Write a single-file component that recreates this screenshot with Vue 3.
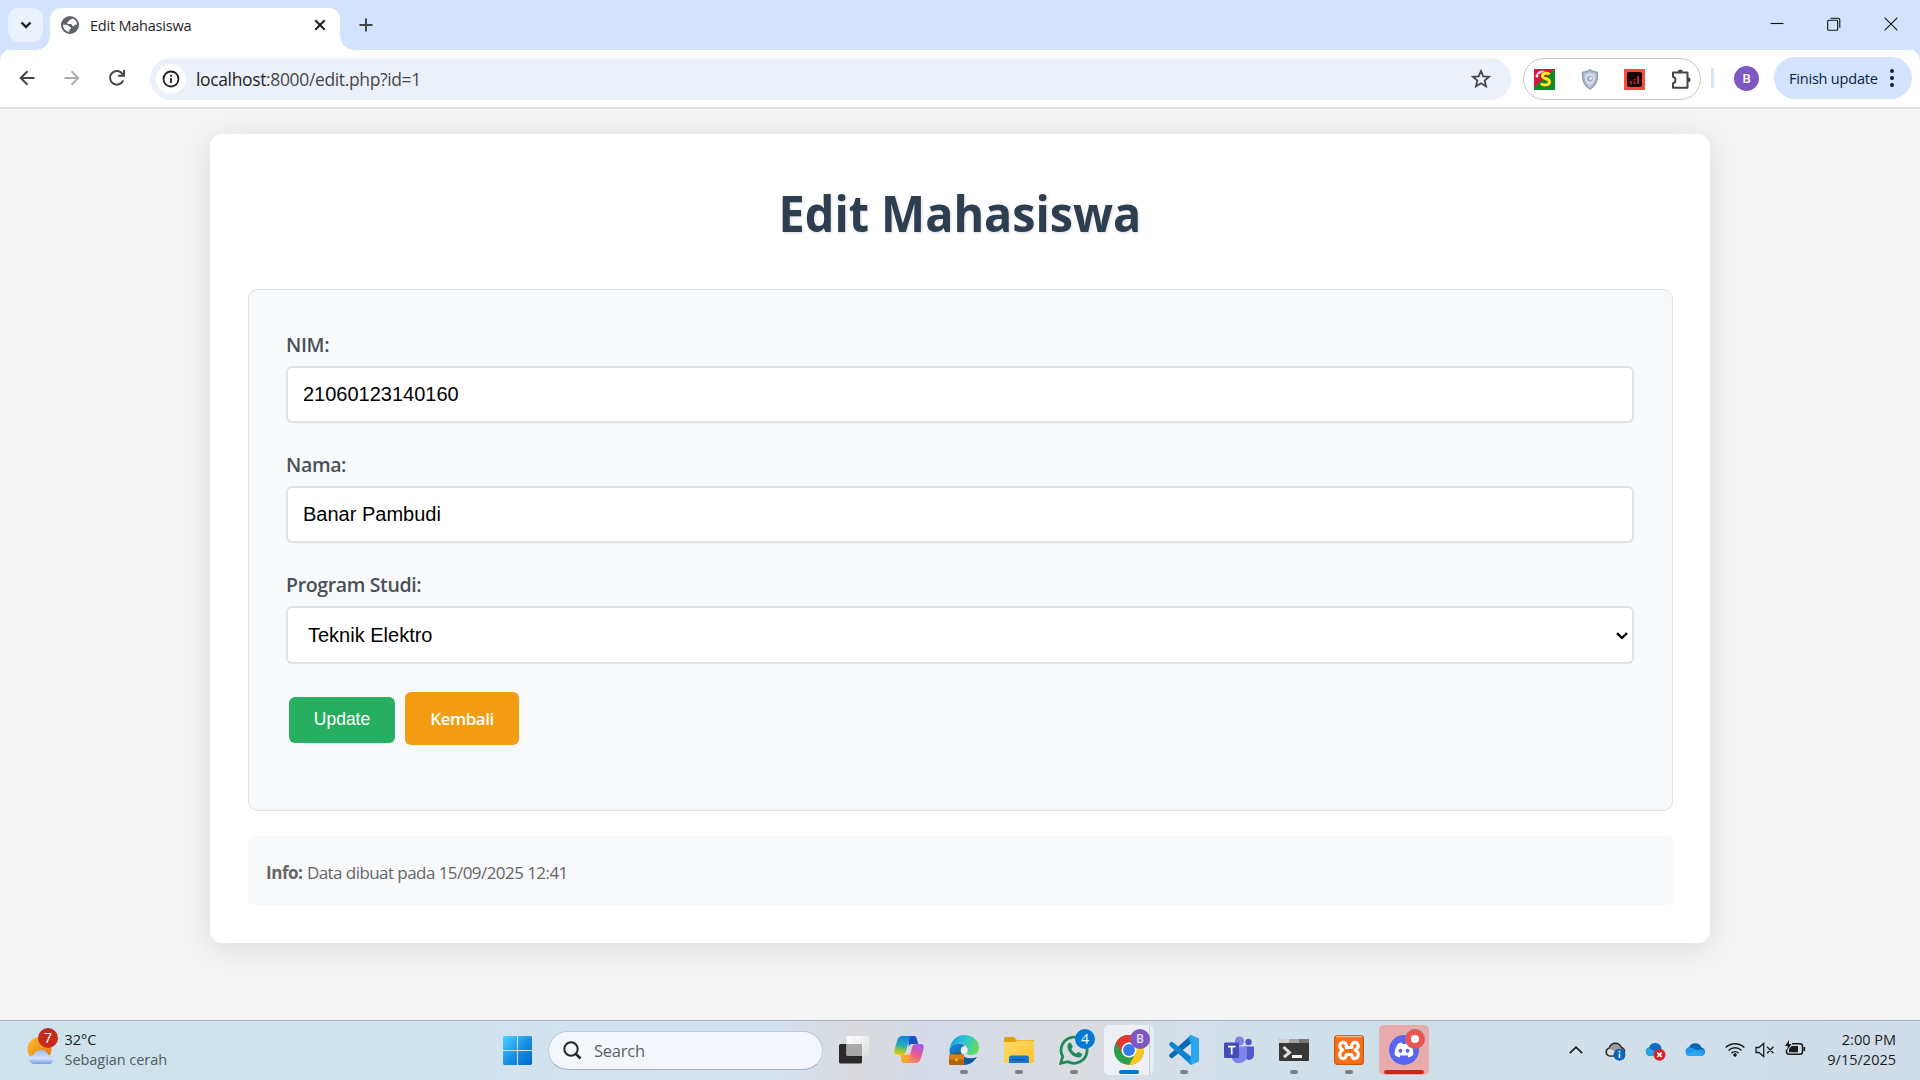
<script setup>
import { ref } from 'vue'

const nim = ref('21060123140160')
const nama = ref('Banar Pambudi')
const prodi = ref('Teknik Elektro')
</script>

<template>
  <div class="screen">
    <header class="tabstrip">
      <button class="tab-search">
        <svg width="12" height="8" viewBox="0 0 12 8"><path d="M1.500 1.500 6 6l4.500-4.500" fill="none" stroke="#1f1f1f" stroke-width="2.400" /></svg>
      </button>
      <div class="tab">
        <svg class="globe" width="18" height="18" viewBox="0 0 18 18">
          <circle cx="9" cy="9" r="9" fill="#5f6368" />
          <path d="M11 2.200c-.3 1.300-1.300 1.600-2.600 1.800-.2 1.500-1.200 1.400-2 2.100-.5 1.200.2 2 1.600 1.900 2-.2 3.300.2 3.400 2.100 1 .2 1.600-.2 2.100-.9.400-.7 1.300-.8 2.500-.2A7 7 0 0 0 11 2.200z" fill="#fff" />
          <path d="M2 8.600c1.200.3 2.800.1 4.200.4 1.700.4 1.200 1.800 2.600 1.900 1.200.1 1.500.9 1.100 1.700-.3.800-1.500.5-1.500 1.500l-.2 1.800A7 7 0 0 1 2 8.600z" fill="#fff" />
        </svg>
        <span class="tab-title">Edit Mahasiswa</span>
        <svg class="tab-close" width="12" height="12" viewBox="0 0 12 12"><path d="m1.300 1.300 9.400 9.400m0-9.400-9.400 9.400" stroke="#1f1f1f" stroke-width="2" /></svg>
      </div>
      <svg class="new-tab" width="14" height="14" viewBox="0 0 14 14"><path d="M7 .5v13M.5 7h13" stroke="#444746" stroke-width="2" /></svg>
      <div class="window-buttons">
        <svg width="14" height="14" viewBox="0 0 14 14"><path d="M.5 6.500h13" stroke="#111" stroke-width="1.100" /></svg>
        <svg width="14" height="14" viewBox="0 0 14 14" fill="none" stroke="#111" stroke-width="1.100"><rect x=".7" y="3.200" width="10" height="10" rx="1" /><path d="M3.500 1.200h7.300a2 2 0 0 1 2 2v7.500" /></svg>
        <svg width="14" height="14" viewBox="0 0 14 14"><path d="m.6.6 12.800 12.800m0-12.800L.6 13.400" stroke="#111" stroke-width="1.100" /></svg>
      </div>
    </header>

    <nav class="toolbar-back">
      <div class="toolbar">
        <div class="nav-buttons">
          <svg width="16" height="16" viewBox="0 0 16 16" fill="none" stroke="#444746" stroke-width="2"><path d="M15.500 8H2M8.500 1.200 1.700 8l6.800 6.800" /></svg>
          <svg width="16" height="16" viewBox="0 0 16 16" fill="none" stroke="#adafae" stroke-width="2"><path d="M.5 8H14M7.500 1.200 14.300 8l-6.800 6.800" /></svg>
          <svg width="18" height="18" viewBox="0 0 18 18" fill="none" stroke="#444746" stroke-width="2"><path d="M15.200 11.300A6.800 6.800 0 1 1 14.800 5.500M16 1v5.800h-5.800" /></svg>
        </div>
        <div class="omnibox">
          <span class="site-info">
            <svg width="18" height="18" viewBox="0 0 18 18"><circle cx="9" cy="9" r="7.500" fill="none" stroke="#1f1f1f" stroke-width="1.800" /><path d="M9 8v5M9 4.800v1.900" stroke="#1f1f1f" stroke-width="1.800" /></svg>
          </span>
          <span class="url"><b>localhost</b>:8000/edit.php?id=1</span>
          <svg class="star" width="20" height="20" viewBox="0 0 20 20"><path d="m10 2 2.300 5.300 5.800.5-4.400 3.800 1.300 5.700-5-3-5 3 1.300-5.700L1.900 7.800l5.800-.5z" fill="none" stroke="#444746" stroke-width="1.800" /></svg>
        </div>
        <div class="extensions">
          <svg width="21" height="21" viewBox="0 0 21 21">
            <path d="M0 0h21v21H0z" fill="#0b8d27" /><path d="M0 0h21L0 18z" fill="#e0123a" />
            <path d="M15.500 6c-1.500-2-7-1.700-7 1.200 0 3.500 7.200 2 7 5.800-.2 3.700-6.700 4-8.500 1.500" fill="none" stroke="#7d4b00" stroke-width="4" />
            <path d="M15.500 5.500c-1.500-2-7-1.700-7 1.500 0 3.500 7.200 2 7 5.800-.2 3.700-6.700 4-8.500 1.500" fill="none" stroke="#ffe928" stroke-width="2.900" />
            <path d="M2 7C3 2 6 1 11 2L7 4z" fill="#f4d8dd" /><circle cx="3" cy="7" r="1.500" fill="#fff" />
          </svg>
          <svg width="18" height="21" viewBox="0 0 18 21">
            <path d="M9 .6c2.400 1.700 4.800 2.300 7.600 2.500.5 7.700-1.300 13.700-7.600 17.200C2.700 16.800.9 10.800 1.400 3.100 4.200 2.900 6.600 2.300 9 .6z" fill="#a6b1c6" stroke="#8994a8" />
            <path d="M9 2.800c1.800 1.100 3.500 1.600 5.700 1.800.1 6-1.300 10.400-5.700 13.400-4.400-3-5.800-7.400-5.700-13.400C5.500 4.400 7.200 3.900 9 2.800z" fill="#c3cddd" />
            <circle cx="9" cy="9.700" r="4.600" fill="#e8edf5" /><circle cx="9" cy="9.700" r="3.200" fill="#a5b0c5" /><circle cx="9.600" cy="9.300" r="1.600" fill="#dce2ec" />
          </svg>
          <svg width="21" height="21" viewBox="0 0 21 21"><path d="M0 0h21v21H0z" fill="#ff4b3e" /><rect x="3" y="3" width="15" height="15" rx="2" fill="#160606" /><path d="M7 12v3M10.500 10v1.500M10.500 12.500V15M14 7v8" stroke="#bd3029" stroke-width="1.800" /></svg>
          <svg width="21" height="21" viewBox="0 0 21 21"><path d="M2 3.500h14.500v15.300H2v-4.300c3.300-.8 3.300-6 0-6.800z" fill="none" stroke="#444746" stroke-width="2" stroke-linejoin="round" /><path d="M6.800 3a2.500 2.500 0 0 1 5 0zM17 8.300a2.500 2.500 0 0 1 0 5z" fill="#444746" /></svg>
        </div>
        <i class="divider"></i>
        <span class="avatar">B</span>
        <button class="update-chip">
          <span>Finish update</span>
          <svg width="4" height="18" viewBox="0 0 4 18" fill="#041e49"><circle cx="2" cy="2" r="2" /><circle cx="2" cy="9" r="2" /><circle cx="2" cy="16" r="2" /></svg>
        </button>
      </div>
    </nav>

    <main class="page">
      <section class="card">
        <h1><span>Edit Mahasiswa</span></h1>
        <form class="panel" @submit.prevent>
          <label for="nim">NIM:</label>
          <input id="nim" v-model="nim" type="text" />
          <label for="nama">Nama:</label>
          <input id="nama" v-model="nama" type="text" />
          <label for="prodi">Program Studi:</label>
          <div class="select-wrap">
            <select id="prodi" v-model="prodi"><option>Teknik Elektro</option></select>
            <svg width="12" height="8" viewBox="0 0 12 8"><path d="M1 1.200 6 6l5-4.800" fill="none" stroke="#000" stroke-width="2.300" /></svg>
          </div>
          <div class="actions">
            <button class="btn update" type="submit">Update</button>
            <a class="btn back">Kembali</a>
          </div>
        </form>
        <div class="info"><strong>Info:</strong> <span>Data dibuat pada 15/09/2025 12:41</span></div>
      </section>
    </main>

    <footer class="taskbar">
      <div class="weather">
        <div class="weather-icon">
          <svg width="28" height="30" viewBox="0 0 28 30">
            <defs>
              <linearGradient id="sun" x1="0" y1="0" x2="1" y2="1"><stop offset="0" stop-color="#f5c52f" /><stop offset="1" stop-color="#ee6a12" /></linearGradient>
              <linearGradient id="cloud" x1="0" y1="0" x2="0" y2="1"><stop offset="0" stop-color="#9fbdf2" /><stop offset=".6" stop-color="#d3e1fa" /><stop offset="1" stop-color="#6f9fe8" /></linearGradient>
            </defs>
            <circle cx="12.500" cy="14" r="12" fill="url(#sun)" />
            <path d="M7 29a4.500 4.500 0 0 1-.5-9c1-3 4-5 7.500-5s6.500 2 7.200 5A4.500 4.500 0 0 1 22.500 29z" fill="url(#cloud)" />
          </svg>
          <span class="badge red">7</span>
        </div>
        <div class="weather-text"><span>32°C</span><span class="muted">Sebagian cerah</span></div>
      </div>

      <svg class="start" width="29" height="29" viewBox="0 0 29 29">
        <defs><linearGradient id="win" x1="0" y1="0" x2="1" y2="1"><stop offset="0" stop-color="#4fd0ff" /><stop offset=".5" stop-color="#1a93e4" /><stop offset="1" stop-color="#0067cf" /></linearGradient></defs>
        <path d="M1 0h13v14H0V1zM15 0h13l1 1v13H15zM0 15h14v14H1l-1-1zM15 15h14v13l-1 1H15z" fill="url(#win)" />
      </svg>
      <div class="search">
        <svg width="19" height="19" viewBox="0 0 19 19"><circle cx="8" cy="8" r="6.700" fill="none" stroke="#252525" stroke-width="2" /><path d="m12.800 12.800 4.700 4.700" stroke="#252525" stroke-width="2.600" /></svg>
        <span>Search</span>
      </div>

      <div class="apps">
        <div class="app">
          <svg width="30" height="30" viewBox="0 0 30 30">
            <defs><linearGradient id="tv" x1="0" y1="0" x2="1" y2="1"><stop offset="0" stop-color="#fff" /><stop offset="1" stop-color="#dedede" /></linearGradient></defs>
            <rect x="0" y="9" width="23" height="19.500" rx="1.500" fill="#2b2a28" /><rect x="7.500" y="1" width="22.500" height="20" rx="1.500" fill="url(#tv)" /><path d="M7.500 9H23v12H9a1.500 1.500 0 0 1-1.500-1.500z" fill="#aaaaa9" />
          </svg>
        </div>
        <div class="app">
          <svg width="30" height="30" viewBox="0 0 30 30">
            <defs>
              <linearGradient id="cp1" x1=".5" y1="0" x2=".3" y2="1"><stop offset="0" stop-color="#1284e6" /><stop offset=".5" stop-color="#27aeb4" /><stop offset=".75" stop-color="#90c73e" /><stop offset="1" stop-color="#f3c51b" /></linearGradient>
              <linearGradient id="cp2" x1=".7" y1="0" x2=".3" y2="1"><stop offset="0" stop-color="#a45bf2" /><stop offset=".5" stop-color="#ec5597" /><stop offset="1" stop-color="#ff9250" /></linearGradient>
            </defs>
            <path d="M14 1h6c2 0 2.600 1.500 3.200 4l1 4H18c-2 0-2.600 1-3.200 3z" fill="#1b4fc4" />
            <path d="M16 28h-6c-2 0-2.600-2-3.500-8H12c2 0 3-.6 3.600-3z" fill="#f7a929" />
            <path d="M8.500 1H18c-2.500.5-3 3.500-4 7.500l-2 8c-.7 2.500-1.500 3.500-4 3.500H3.500C.5 20-.2 18 .5 15L3 6c.9-3.300 2.500-5 5.500-5z" fill="url(#cp1)" />
            <path d="M21.500 28H12c2.500-.5 3-3.500 4-7.500l2-8C18.700 10 19.500 9 22 9h4.500c3 0 3.700 2 3 5L27 23c-.9 3.300-2.500 5-5.500 5z" fill="url(#cp2)" />
          </svg>
        </div>
        <div class="app running">
          <svg width="30" height="30" viewBox="0 0 30 30">
            <defs>
              <linearGradient id="ed1" x1="0" y1=".2" x2="1" y2=".5"><stop offset="0" stop-color="#189de0" /><stop offset=".5" stop-color="#2cc5d4" /><stop offset="1" stop-color="#62dd5a" /></linearGradient>
              <linearGradient id="ed2" x1="0" y1="0" x2="1" y2="1"><stop offset="0" stop-color="#1887d8" /><stop offset="1" stop-color="#0d4c91" /></linearGradient>
            </defs>
            <path d="M.6 14C3 10 6 8.500 10 8.500c3 0 5 1 6 2.500-4 0-5 4-3.500 7.500 2.500 5 9.500 6 15.500 3.500-3 5-8 8-13 8A14.800 14.800 0 0 1 .6 14z" fill="url(#ed2)" />
            <path d="M.6 14C2 5.500 8 0 15 0c8.500 0 15 5.500 15 12.500 0 5-3.500 7.500-8 7.500-3.500 0-5-1.300-4.500-3 1.300-2.500.6-8.500-6.500-8.500C6 8.500 2 11 .6 14z" fill="url(#ed1)" />
            <circle cx="15.300" cy="15" r="3.500" fill="#e5edf3" />
            <rect x="0" y="19.500" width="15" height="10.500" rx="1" fill="#b5620b" /><path d="M0 21a1.500 1.500 0 0 1 1.500-1.500h12A1.500 1.500 0 0 1 15 21v3.500H0z" fill="#d9820f" /><path d="M5 19.500v-1.200h5v1.200" fill="none" stroke="#7b3d05" /><rect x="6.500" y="23.500" width="2" height="2.500" fill="#ffd348" />
          </svg>
        </div>
        <div class="app running">
          <svg width="30" height="30" viewBox="0 0 30 30">
            <defs><linearGradient id="fo" x1="0" y1="0" x2="1" y2="1"><stop offset="0" stop-color="#ffdc6b" /><stop offset="1" stop-color="#fcc02b" /></linearGradient></defs>
            <path d="M0 3.500A1.500 1.500 0 0 1 1.500 2H10l3 3h17v6H0z" fill="#e0a10c" /><path d="M0 7h11l2-1.500h15.500A1.500 1.500 0 0 1 30 7v19.500a1.500 1.500 0 0 1-1.500 1.500h-27A1.500 1.500 0 0 1 0 26.500z" fill="url(#fo)" />
            <path d="M5 28v-5a2.500 2.500 0 0 1 2.500-2.500h15A2.500 2.500 0 0 1 25 23v5z" fill="#1378cf" /><path d="M8.500 24.700h13" stroke="#0a4d94" stroke-width="1.300" />
          </svg>
        </div>
        <div class="app running">
          <svg width="30" height="30" viewBox="0 0 30 30">
            <path d="m1.700 28.300 2-6.800A13 13 0 1 1 9 26.700z" fill="none" stroke="#1e8a5b" stroke-width="2.800" />
            <path d="M8.600 9.600c.9-1.700 2.600-2.200 3.300-1.500l1.800 3.500c.2.900-1 1.900-1.300 2.400.7 2 2.900 4.100 5 4.600.7-.5 1.500-1.900 2.500-1.600l3.300 1.900c.3 1.800-1.800 3.600-3.700 3.600-5.900-.2-12-6.600-10.900-12.900z" fill="#1e8a5b" />
          </svg>
          <span class="badge blue">4</span>
        </div>
        <div class="app active">
          <svg width="30" height="30" viewBox="0 0 30 30">
            <circle cx="15" cy="15" r="15" fill="#2a9e48" />
            <path d="M15 15 2 7.500A15 15 0 0 1 28 7.500z" fill="#e43b2e" /><path d="M15 7.500h13A15 15 0 0 1 15 30l6.500-11.200z" fill="#fdc71c" /><path d="M2 7.500A15 15 0 0 1 15 0v12L8.500 18.800z" fill="#e43b2e" />
            <circle cx="15" cy="15" r="7.500" fill="#fff" /><circle cx="15" cy="15" r="5.900" fill="#3079ee" />
          </svg>
          <span class="badge purple">B</span>
        </div>
        <div class="app running">
          <svg width="30" height="30" viewBox="0 0 30 30">
            <path d="M22 0v8.500L3.500 23c-.6.5-1.300.4-1.800-.1L.4 21.600c-.6-.6-.6-1.400 0-2z" fill="#0a6bb2" />
            <path d="M22 30v-8.500L3.500 7c-.6-.5-1.300-.4-1.800.1L.4 8.400c-.6.6-.6 1.400 0 2z" fill="#0d83d0" />
            <path d="M22 0 30 3.500v23L22 30z" fill="#2ba6f2" /><path d="m22 0-3 2.700 3 5.800zM22 30l-3-2.700 3-5.800z" fill="#2196e0" />
          </svg>
        </div>
        <div class="app">
          <svg width="30" height="30" viewBox="0 0 30 30">
            <circle cx="24.500" cy="7" r="3.200" fill="#5059c9" /><circle cx="15.500" cy="6" r="4.500" fill="#7b83eb" /><path d="M20 11.500h9a1 1 0 0 1 1 1V20a5 5 0 0 1-8.500 3.500z" fill="#5059c9" />
            <path d="M9 11.500h13a1 1 0 0 1 1 1V20a8 8 0 0 1-15 4V12.500a1 1 0 0 1 1-1z" fill="#7b83eb" /><rect x="0" y="7.500" width="15" height="15.500" rx="1.300" fill="#444db4" /><path d="M4 11.700h7.500M7.700 12v7.500" stroke="#fff" stroke-width="1.700" />
          </svg>
        </div>
        <div class="app running">
          <svg width="30" height="30" viewBox="0 0 30 30">
            <rect y="4" width="30" height="22" rx="1.200" fill="#383838" /><path d="M0 8V5.200C0 4.500.5 4 1.200 4H10v4z" fill="#d0d0d0" /><path d="M10 4h10v4H10z" fill="#a2a2a2" /><path d="M20 4h8.800c.7 0 1.200.5 1.200 1.200V8H20z" fill="#767676" />
            <path d="m4.500 12 6 5.500-5.500 4.700" fill="none" stroke="#ddd" stroke-width="3" /><path d="M13 21.500h10" stroke="#f2f2f2" stroke-width="3" />
          </svg>
        </div>
        <div class="app running">
          <svg width="30" height="30" viewBox="0 0 30 30">
            <rect x=".6" y=".6" width="28.800" height="28.800" rx="3" fill="#f6701a" stroke="#c75a13" stroke-width="1.200" /><path d="M2 1.500h26" stroke="#ffb57f" stroke-width="1.400" />
            <path d="M12.300 11c0-5.500-7-4.500-6.500.5.200 2 1.600 2.500 3 3.500-1.400 1-2.800 1.500-3 3.500-.5 6 6.500 7 6.500 1h5.400c0 6 7 5 6.500-1-.2-2-1.600-2.500-3-3.500 1.400-1 2.800-1.500 3-3.500.5-5-6.500-6-6.500-.5v1.500h-5.400z" fill="none" stroke="#fff" stroke-width="3.200" stroke-linejoin="round" />
          </svg>
        </div>
        <div class="app alert">
          <svg width="30" height="30" viewBox="0 0 30 30">
            <circle cx="15" cy="15" r="15" fill="#5865f2" />
            <path d="M9 8.700c1.500-.7 2.600-.9 3.800-1.100l.7 1.300h3l.7-1.300c1.300.2 2.500.5 3.800 1.100 2.500 3.600 3.700 7.500 3.300 11.400-1.500 1.100-3 1.800-4.700 2.300l-1.100-1.900 1.400-.8c-3 1.200-6.800 1.200-9.800 0l1.400.8-1.100 1.900c-1.700-.5-3.200-1.200-4.700-2.300C5.300 16.200 6.500 12.300 9 8.700z" fill="#fff" />
            <ellipse cx="11.400" cy="15.800" rx="1.900" ry="2.100" fill="#5865f2" /><ellipse cx="18.600" cy="15.800" rx="1.900" ry="2.100" fill="#5865f2" />
          </svg>
          <span class="badge rec"></span>
        </div>
      </div>

      <div class="tray">
        <svg width="14" height="8" viewBox="0 0 14 8"><path d="m.8 7.200 6.200-6 6.200 6" fill="none" stroke="#1b1b1b" stroke-width="1.700" /></svg>
        <svg class="cloud-one" width="21" height="19" viewBox="0 0 21 19">
          <path d="M4.500 14A4 4 0 0 1 4 6.200C5 3 7.500 1.200 10.500 1.200S15.500 3 16.500 5.500c1.800.5 3 2 3 4S18 14 16 14z" fill="#9c9c9c" stroke="#2c2c2c" stroke-width="1.400" /><path d="M4.500 13.200A3.400 3.400 0 0 1 4 7c3 0 7 3 9 6.200z" fill="#ddd" />
          <circle cx="14.500" cy="12.800" r="6" fill="#0864b8" /><path d="M14.500 11.500v4.500M14.500 8.800v1.700" stroke="#fff" stroke-width="1.600" />
        </svg>
        <svg class="cloud-two" width="21" height="19" viewBox="0 0 21 19">
          <path d="M4.500 14A4.500 4.500 0 0 1 4 5.300C5 2.500 7.500 1 10.200 1c3 0 5.400 1.800 6.300 4.500V14z" fill="#0c6ec4" /><path d="M4.500 14A4.500 4.500 0 0 1 2 6.500c3-.8 7 1 10 7.500z" fill="#2ba0ea" />
          <circle cx="14.500" cy="12.800" r="6" fill="#d3232c" /><path d="m12.300 10.600 4.400 4.400m0-4.400L12.300 15" stroke="#fff" stroke-width="1.700" />
        </svg>
        <svg class="cloud-three" width="20" height="14" viewBox="0 0 20 14">
          <path d="M4.500 13A4.500 4.500 0 0 1 4 4.300C5 1.500 7.500.3 10.200.3c3 0 5.400 1.500 6.300 4.200 2 .3 3.500 2 3.500 4.200C20 11 18 13 15.500 13z" fill="#0764b7" /><path d="M4.500 13A4.500 4.500 0 0 1 2.500 4.800C6 4 9 5 12 7c2-1 5-.8 7.500 0C21 10 18.500 13 15.500 13z" fill="#1e95e6" /><path d="M4.500 13c-1.500 0-3-.6-3.800-2L12 7.300c2.700 1.200 5 2.700 7 4.200-.8 1-2 1.500-3.500 1.500z" fill="#28a8ee" />
        </svg>
        <svg class="wifi" width="20" height="15" viewBox="0 0 20 15" fill="none" stroke="#1b1b1b" stroke-width="1.500"><path d="M.7 5.500a13.200 13.200 0 0 1 18.600 0M3.500 8.500a9.200 9.200 0 0 1 13 0M6.400 11.300a5.200 5.200 0 0 1 7.200 0" /><circle cx="10" cy="13" r="1.300" fill="#1b1b1b" stroke-width="1" /></svg>
        <svg class="volume" width="20" height="16" viewBox="0 0 20 16" fill="none" stroke="#1b1b1b" stroke-width="1.300"><path d="M1 5.500h3L8.700 1.500v13L4 10.500H1zM12 4.800l6.500 6.500m0-6.500L12 11.300" /></svg>
        <svg class="battery" width="21" height="16" viewBox="0 0 21 16"><path d="M7 3.700h8a2.500 2.500 0 0 1 2.500 2.500v5.600a2.500 2.500 0 0 1-2.500 2.500H4a2.500 2.500 0 0 1-2.500-2.500V9.500" fill="none" stroke="#1b1b1b" stroke-width="1.500" /><path d="M6.500 6H13v6.200H4V9zM18.500 7h1.700v4h-1.700zM4 0 0 6h2.800L2 10.500 6.500 4H4z" fill="#1b1b1b" /></svg>
        <div class="clock"><span>2:00 PM</span><span>9/15/2025</span></div>
      </div>
    </footer>
  </div>
</template>

<style>
body {
  margin: 0;
  overflow: hidden;
}
</style>

<style scoped>
.screen {
  display: flex;
  flex-direction: column;
  width: 1920px;
  height: 1080px;
  font-family: "Open Sans", "Noto Sans", sans-serif;
  background: #f4f4f4;
}
.screen * {
  box-sizing: border-box;
}
svg {
  display: block;
  flex: none;
}
button {
  border: 0;
  padding: 0;
  font-family: inherit;
}

.tabstrip {
  display: flex;
  height: 50px;
  padding: 8px 0 0 8px;
  background: #d3e3fd;
}
.tab-search {
  display: grid;
  place-items: center;
  width: 35px;
  height: 34px;
  border-radius: 11px;
  background: #ebf1fd;
}
.tab {
  position: relative;
  display: flex;
  align-items: center;
  width: 290px;
  height: 42px;
  margin-left: 7px;
  padding: 0 14px 8px 11px;
  border-radius: 11px 11px 0 0;
  background: #fff;
}
.tab::before,
.tab::after {
  content: "";
  position: absolute;
  bottom: 0;
  width: 14px;
  height: 14px;
}
.tab::before {
  left: -14px;
  background: radial-gradient(circle at 0 0, transparent 13.500px, #fff 14px);
}
.tab::after {
  right: -14px;
  background: radial-gradient(circle at 100% 0, transparent 13.500px, #fff 14px);
}
.tab-title {
  flex: 1;
  margin-left: 11px;
  font-size: 14.500px;
  letter-spacing: -0.220px;
  color: #1f1f1f;
}
.new-tab {
  margin: 10px 0 0 19px;
}
.window-buttons {
  display: flex;
  gap: 43px;
  margin: 9px 22px 0 auto;
}

.toolbar-back {
  background: #d3e3fd;
}
.toolbar {
  display: flex;
  align-items: center;
  height: 59px;
  padding: 0 8px 1px 19px;
  border-bottom: 2px solid #dfdfdf;
  border-radius: 10px 10px 0 0;
  background: #fff;
}
.nav-buttons {
  display: flex;
  align-items: center;
  gap: 28.500px;
  width: 131px;
}
.omnibox {
  display: flex;
  align-items: center;
  width: 1361px;
  height: 42px;
  margin-top: 1px;
  padding: 0 20px 0 6px;
  border-radius: 21px;
  background: #ebf0f9;
}
.site-info {
  display: grid;
  place-items: center;
  width: 30px;
  height: 30px;
  border-radius: 50%;
  background: #fff;
}
.url {
  flex: 1;
  margin-left: 10px;
  padding-top: 1px;
  font-size: 17.500px;
  letter-spacing: -0.360px;
  color: #474747;
}
.url b {
  font-weight: 400;
  color: #1f1f1f;
}
.star {
  margin-top: 1px;
}
.extensions {
  display: flex;
  align-items: center;
  justify-content: space-between;
  width: 178px;
  height: 42px;
  margin: 1px 0 0 12px;
  padding: 1px 8px 0 10px;
  border: 1px solid #c7c7c7;
  border-radius: 21px;
}
.divider {
  width: 3px;
  height: 20px;
  margin-left: 10px;
  border-radius: 2px;
  background: #d3e3fd;
}
.avatar {
  display: grid;
  place-items: center;
  width: 25px;
  height: 25px;
  margin-left: 20px;
  border-radius: 50%;
  background: #7e57c2;
  color: #fff;
  font: 500 13px Roboto, sans-serif;
}
.update-chip {
  display: flex;
  align-items: center;
  justify-content: space-between;
  width: 138px;
  height: 42px;
  margin-left: auto;
  padding: 0 18px 0 15px;
  border-radius: 21px;
  background: #d3e3fd;
  color: #041e49;
  font-size: 14.500px;
  letter-spacing: -0.200px;
  white-space: nowrap;
}

.page {
  flex: 1;
  padding-top: 25px;
  background: #f4f4f4;
  overflow: hidden;
}
.card {
  width: 1500px;
  height: 809px;
  margin: 0 auto;
  padding: 49px 37px 0 38px;
  border-radius: 12px;
  background: #fff;
  box-shadow: 0 5px 31px rgba(0, 0, 0, 0.1);
}
h1 {
  margin: 0 0 46px;
  font-size: 50px;
  line-height: 60px;
  text-align: center;
  color: #2c3e50;
  text-shadow: 1px 1px 3px rgba(0, 0, 0, 0.15);
}
h1 span {
  display: inline-block;
  margin-right: 2px;
  transform: scaleX(0.935);
}
.panel {
  height: 522px;
  padding: 40px 38px 0 37px;
  border: 1px solid #dee2e6;
  border-radius: 10px;
  background: #f8f9fb;
}
.panel label {
  display: block;
  margin-bottom: 6px;
  font-size: 19.500px;
  font-weight: 600;
  line-height: 30px;
  letter-spacing: -0.350px;
  color: #495057;
}
.panel input,
.panel select {
  display: block;
  width: 100%;
  height: 57px;
  padding: 0 15px;
  border: 2px solid #dee2e6;
  border-radius: 6px;
  background: #fff;
  color: #000;
  font: 20px "Liberation Sans", sans-serif;
}
.panel input {
  margin-bottom: 27px;
}
.select-wrap {
  position: relative;
}
.panel select {
  height: 58px;
  padding-left: 20px;
  appearance: none;
}
.select-wrap svg {
  position: absolute;
  top: 26px;
  right: 6px;
}
.actions {
  display: flex;
  gap: 10px;
  align-items: flex-end;
  margin: 28px 0 0 3px;
}
.btn {
  border-radius: 6px;
  color: #fff;
  text-align: center;
}
.btn.update {
  width: 106px;
  height: 46px;
  margin-bottom: 2px;
  padding-bottom: 1px;
  background: #27ae60;
  font: 17.500px "Liberation Sans", sans-serif;
}
.btn.back {
  width: 114px;
  height: 53px;
  background: #f39c12;
  font-size: 17px;
  font-weight: 600;
  line-height: 53px;
  letter-spacing: -0.500px;
}
.info {
  height: 69px;
  margin-top: 25px;
  padding-left: 18px;
  border-radius: 6px;
  background: #f8f9fb;
  color: #666;
  font-size: 17px;
  line-height: 73px;
}
.info strong {
  letter-spacing: -0.450px;
}
.info span {
  letter-spacing: -0.560px;
}

.taskbar {
  display: flex;
  align-items: center;
  height: 60px;
  border-top: 1px solid #a6aeb8;
  background: linear-gradient(90deg, #cfe3ed 0, #cfe3ee 480px, #d4e2f0 620px, #d4e1ee 780px, #dadade 855px, #d4dce9 930px, #dadce0 1080px, #d4dfe9 1180px, #cfe0eb 1350px, #d0dfea 1600px, #d0dde9 1920px);
}
.weather {
  display: flex;
  width: 475px;
  height: 59px;
  padding-left: 27px;
}
.weather-icon {
  position: relative;
  width: 37.500px;
  padding-top: 14px;
}
.weather-text,
.clock {
  display: flex;
  flex-direction: column;
  font-size: 14.500px;
  line-height: 20px;
  color: #1b1b1b;
}
.weather-text {
  padding-top: 9px;
  letter-spacing: -0.050px;
}
.weather-text .muted {
  color: #51595e;
}
.badge {
  position: absolute;
  display: grid;
  place-items: center;
  width: 20px;
  height: 20px;
  border-radius: 50%;
  color: #fff;
  font-size: 14px;
  line-height: 20px;
}
.badge.red {
  top: 7px;
  left: 11px;
  background: #c42b1c;
}
.start {
  margin: 0 0 0 28px;
}
.search {
  display: flex;
  align-items: center;
  width: 275px;
  height: 39px;
  margin: 0 0 1px 16px;
  padding-left: 14px;
  border: 1px solid #bccbd9;
  border-bottom-color: #9fb0c0;
  border-radius: 20px;
  background: #f3f7fb;
}
.search span {
  margin-left: 12px;
  font-size: 16.500px;
  letter-spacing: -0.250px;
  color: #5b6065;
}
.apps {
  display: flex;
  gap: 5px;
  margin: 0 0 1px 6px;
}
.app {
  position: relative;
  width: 50px;
  height: 50px;
  padding: 10px;
  border-radius: 5px;
}
.running::after,
.active::after,
.alert::after {
  content: "";
  position: absolute;
  bottom: 1px;
  left: 21px;
  width: 8px;
  height: 4px;
  border-radius: 2px;
  background: #7c8084;
}
.active {
  background: linear-gradient(90deg, #edf0f5 0 45px, #c9ced6 45px 46px, #e6ebf2 46px);
}
.active::after {
  left: 15px;
  width: 20px;
  background: #0078d7;
}
.alert {
  background: #e8abab;
}
.alert::after {
  left: 5px;
  width: 40px;
  background: #c42b1c;
}
.badge.blue {
  top: 4px;
  left: 26px;
  background: #0078d4;
}
.badge.purple {
  top: 4px;
  left: 26px;
  background: #7e57c2;
  color: #e5dbf5;
  font: 500 12px/20px Roboto, sans-serif;
}
.badge.rec {
  top: 5px;
  left: 27px;
  width: 18px;
  height: 18px;
  border: 5px solid #ef5350;
  background: #fff;
  box-shadow: 0 0 0 1px #b56e78;
}
.tray {
  display: flex;
  align-items: center;
  height: 100%;
  margin: 0 24px 0 auto;
  padding-bottom: 2px;
}
.cloud-one {
  margin: 3px 0 0 22px;
}
.cloud-two {
  margin: 3px 0 0 19px;
}
.cloud-three {
  margin-left: 19px;
}
.wifi {
  margin-left: 20px;
}
.volume {
  margin-left: 10px;
}
.battery {
  margin: -3px 0 0 10px;
}
.clock {
  width: 90px;
  text-align: right;
  letter-spacing: 0;
}
</style>
